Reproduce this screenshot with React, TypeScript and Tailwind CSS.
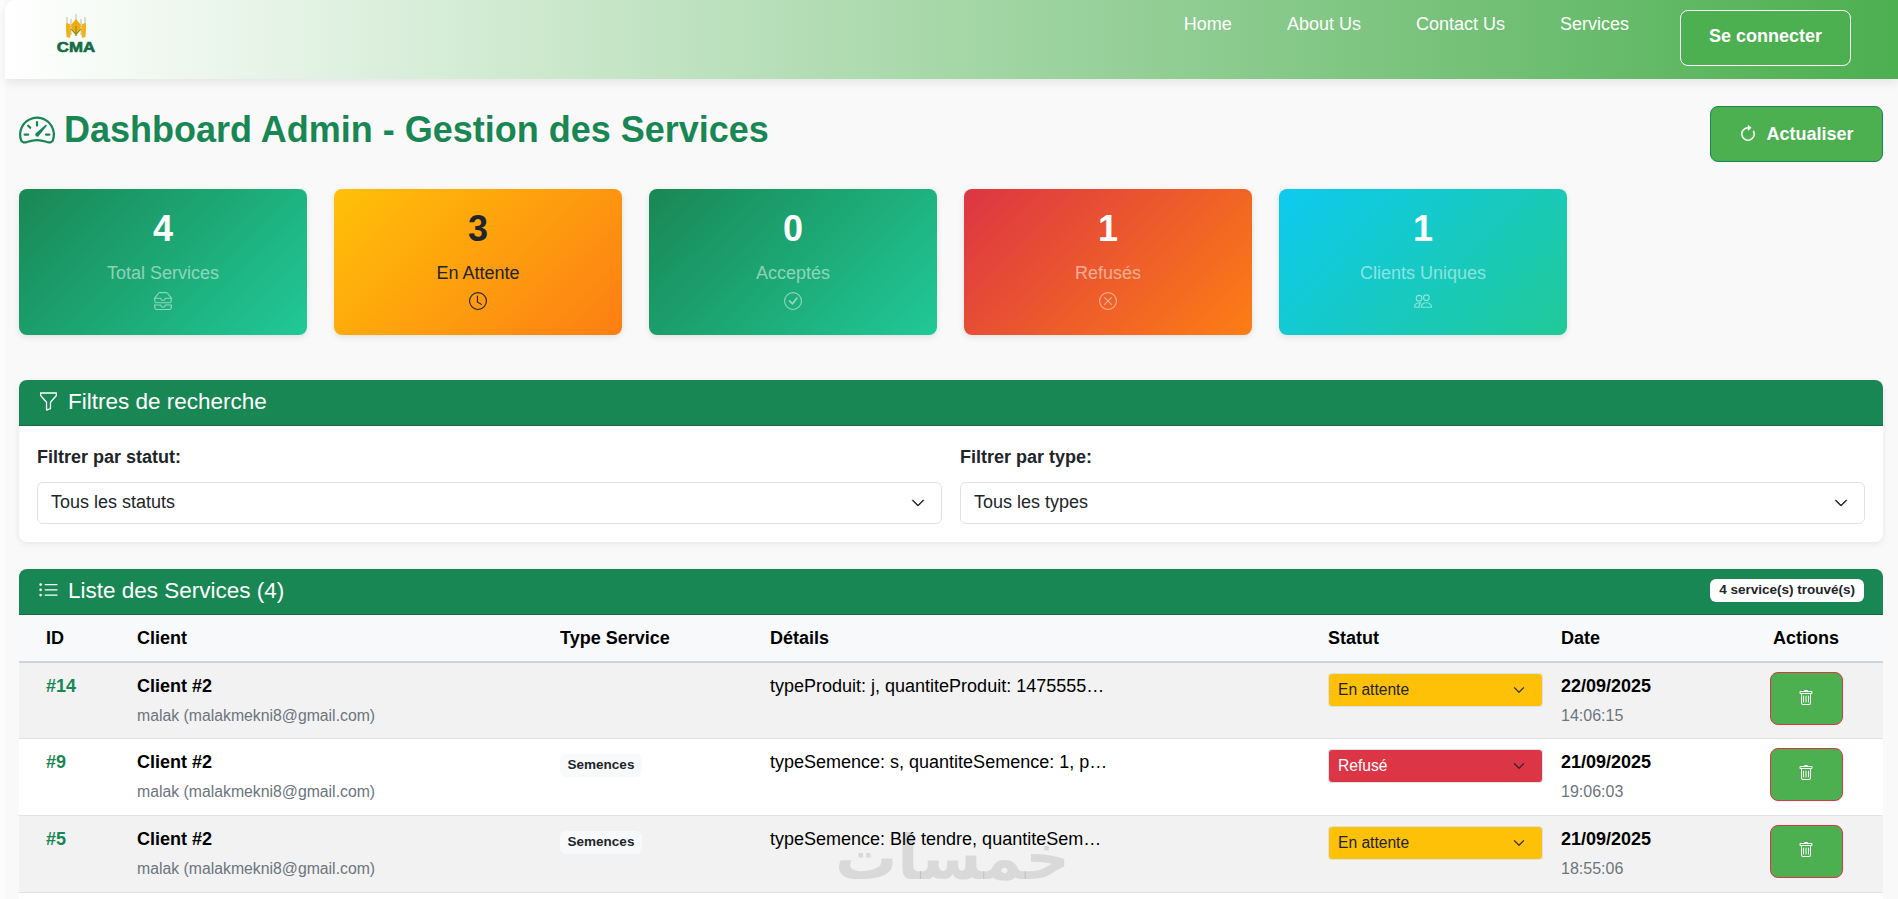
import { BsSpeedometer2, BsInboxes, BsClock, BsCheckCircle, BsXCircle, BsPeople, BsFunnel, BsListUl, BsTrash, BsArrowClockwise, BsChevronDown } from "react-icons/bs";

function Logo() {
  return (
    <div className="flex w-[60px] flex-col items-center">
      <svg width="24" height="26" viewBox="0 0 24 26">
        <path d="M3 3v20M7 5v16M12 0v22M17 5v16M21 3v20" stroke="#b9bfae" strokeWidth="1" fill="none" />
        <path d="M2 9l4 1 1 6-1 8-3-1-1-6z" fill="#f2b21a" />
        <path d="M22 9l-4 1-1 6 1 8 3-1 1-6z" fill="#f2b21a" />
        <path d="M12 5l5 6-1 6-4 5-4-5-1-6z" fill="#f5a90f" />
        <path d="M7 15l5 5 5-5M12 12v10" stroke="#5c9a3c" strokeWidth="1" fill="none" />
      </svg>
      <span className="mt-[1px] scale-x-[1.2] text-[14px] leading-[13px] font-bold text-[#146c43] [-webkit-text-stroke:0.6px_#146c43]">CMA</span>
    </div>
  );
}

const stats = [
  { n: "4", l: "Total Services", I: BsInboxes, g: "bg-[linear-gradient(135deg,#198754,#20c997)]", t: "text-white", s: "text-white/50" },
  { n: "3", l: "En Attente", I: BsClock, g: "bg-[linear-gradient(135deg,#ffc107,#fd7e14)]", t: "text-[#212529]", s: "text-[#212529]" },
  { n: "0", l: "Acceptés", I: BsCheckCircle, g: "bg-[linear-gradient(135deg,#198754,#20c997)]", t: "text-white", s: "text-white/50" },
  { n: "1", l: "Refusés", I: BsXCircle, g: "bg-[linear-gradient(135deg,#dc3545,#fd7e14)]", t: "text-white", s: "text-white/50" },
  { n: "1", l: "Clients Uniques", I: BsPeople, g: "bg-[linear-gradient(135deg,#0dcaf0,#20c997)]", t: "text-white", s: "text-white/50" },
];

const rows = [
  { id: "#14", type: "", d: "typeProduit: j, quantiteProduit: 1475555…", st: "En attente", date: "22/09/2025", time: "14:06:15", bg: "h-[76px] bg-[#f2f2f2]" },
  { id: "#9", type: "Semences", d: "typeSemence: s, quantiteSemence: 1, p…", st: "Refusé", date: "21/09/2025", time: "19:06:03", bg: "h-[77px] bg-white" },
  { id: "#5", type: "Semences", d: "typeSemence: Blé tendre, quantiteSem…", st: "En attente", date: "21/09/2025", time: "18:55:06", bg: "h-[77px] bg-[#f2f2f2]" },
];

function FilterSelect({ label, value }: { label: string; value: string }) {
  return (
    <div className="flex-1">
      <div className="mb-[11px] text-[18px] leading-[27px] font-bold text-[#212529]">{label}</div>
      <div className="flex h-[42px] items-center justify-between rounded-[6px] border border-[#dee2e6] bg-white pb-[1px] pl-[13px] pr-[16px] text-[18px] text-[#212529]">
        <span>{value}</span>
        <BsChevronDown className="text-[14px]" strokeWidth="0.8" />
      </div>
    </div>
  );
}

export default function App() {
  return (
    <div className="relative h-screen overflow-hidden bg-[#fcfcfc] pl-[5px] font-['Liberation_Sans',Arial,sans-serif]">
      <div className="h-full bg-[#f9f9f9]">
        <nav className="relative z-10 flex h-[79px] items-start justify-between rounded-tl-[10px] bg-[linear-gradient(90deg,#ffffff,#4caf50)] pl-[41px] pr-[47px] shadow-[0_4px_10px_rgba(0,0,0,0.08)]">
          <div className="pt-[14px]"><Logo /></div>
          <div className="flex items-start">
            <div className="mt-[13px] flex gap-[55px] text-[18px] leading-[22px] text-white">
              <span>Home</span>
              <span>About Us</span>
              <span>Contact Us</span>
              <span>Services</span>
            </div>
            <div className="mt-[10px] ml-[51px] flex h-[56px] w-[171px] items-center justify-center rounded-[8px] border border-white bg-[#4caf50] pb-[3px] text-[18px] font-bold text-white">Se connecter</div>
          </div>
        </nav>

        <div className="pl-[14px] pr-[15px]">
          <div className="flex items-start justify-between pt-[27px]">
            <h1 className="mt-[3px] flex items-center gap-[9px] text-[36px] leading-[42px] font-bold text-[#198754]">
              <BsSpeedometer2 className="h-[36px] w-[36px]" />
              Dashboard Admin - Gestion des Services
            </h1>
            <div className="flex h-[56px] w-[173px] items-center justify-center gap-[9px] rounded-[8px] border border-[#198754] bg-[#4caf50] text-[18px] font-bold text-white">
              <BsArrowClockwise className="text-[18px]" strokeWidth="0.4" />
              Actualiser
            </div>
          </div>

          <div className="mt-[27px] flex gap-[27px]">
            {stats.map((s) => (
              <div key={s.l} className={`flex h-[146px] w-[288px] flex-col items-center rounded-[8px] pt-[19px] shadow-[0_2px_6px_rgba(0,0,0,0.1)] ${s.g}`}>
                <div className={`text-[36px] leading-[42px] font-bold ${s.t}`}>{s.n}</div>
                <div className={`mt-[13px] text-[18px] leading-[21px] ${s.s}`}>{s.l}</div>
                <s.I className={`mt-[8px] h-[18px] w-[18px] ${s.s}`} />
              </div>
            ))}
          </div>

          <div className="mt-[45px] overflow-hidden rounded-[8px] bg-white shadow-[0_2px_6px_rgba(0,0,0,0.08)]">
            <div className="flex h-[46px] items-center gap-[9px] border-b border-[#146c43] bg-[#198754] pb-[2px] pl-[19px] text-[22.5px] text-white">
              <BsFunnel className="h-[21px] w-[21px]" />
              Filtres de recherche
            </div>
            <div className="flex gap-[18px] px-[18px] pt-[18px] pb-[18px]">
              <FilterSelect label="Filtrer par statut:" value="Tous les statuts" />
              <FilterSelect label="Filtrer par type:" value="Tous les types" />
            </div>
          </div>

          <div className="mt-[27px] overflow-hidden rounded-t-[8px] bg-white">
            <div className="flex h-[46px] items-center justify-between border-b border-[#146c43] bg-[#198754] pb-[2px] pl-[19px] pr-[19px] text-[22.5px] text-white">
              <div className="flex items-center gap-[9px]">
                <BsListUl className="h-[21px] w-[21px]" />
                Liste des Services (4)
              </div>
              <span className="flex h-[23px] items-center rounded-[6px] bg-white px-[9px] text-[13.5px] font-bold text-[#212529]">4 service(s) trouvé(s)</span>
            </div>
            <table className="w-full table-fixed border-collapse text-[18px]">
              <colgroup>
                <col className="w-[110px]" />
                <col className="w-[423px]" />
                <col className="w-[210px]" />
                <col className="w-[558px]" />
                <col className="w-[233px]" />
                <col className="w-[176px]" />
                <col />
              </colgroup>
              <thead>
                <tr className="h-[47px] border-b-2 border-[#ced4da] bg-[#f8f9fa] text-left font-bold text-black">
                  <th className="pl-[27px]">ID</th>
                  <th className="pl-[8px]">Client</th>
                  <th className="pl-[8px]">Type Service</th>
                  <th className="pl-[8px]">Détails</th>
                  <th className="pl-[8px]">Statut</th>
                  <th className="pl-[8px]">Date</th>
                  <th className="text-center">Actions</th>
                </tr>
              </thead>
              <tbody>
                {rows.map((r) => (
                  <tr key={r.id} className={`border-b border-[#dee2e6] align-top ${r.bg}`}>
                    <td className="pl-[27px] pt-[10px] leading-[27px] font-bold text-[#198754]">{r.id}</td>
                    <td className="pl-[8px] pt-[10px]">
                      <div className="leading-[27px] font-bold text-black">Client #2</div>
                      <div className="mt-[4px] text-[15.8px] leading-[24px] text-[#6c757d]">malak (malakmekni8@gmail.com)</div>
                    </td>
                    <td className="pl-[8px] pt-[15px]">
                      {r.type && <span className="flex h-[23px] w-[82px] items-center justify-center rounded-[6px] bg-[#f8f9fa] text-[13.5px] font-bold text-[#212529]">{r.type}</span>}
                    </td>
                    <td className="pl-[8px] pt-[10px] leading-[27px] whitespace-nowrap text-black">{r.d}</td>
                    <td className="pl-[8px] pt-[10px]">
                      <div className={`flex h-[34px] w-[215px] items-center justify-between rounded-[4px] border border-[#dee2e6] pl-[9px] pr-[17px] text-[15.6px] ${r.st === "Refusé" ? "bg-[#dc3545] text-white" : "bg-[#ffc107] text-[#212529]"}`}>
                        <span>{r.st}</span>
                        <BsChevronDown className="text-[12px] text-[#212529]" strokeWidth="0.8" />
                      </div>
                    </td>
                    <td className="pl-[8px] pt-[10px]">
                      <div className="leading-[27px] font-bold text-black">{r.date}</div>
                      <div className="mt-[4px] text-[16px] leading-[24px] text-[#6c757d]">{r.time}</div>
                    </td>
                    <td className="pt-[9px] text-center">
                      <div className="mx-auto flex h-[53px] w-[73px] items-center justify-center rounded-[8px] border border-[#dc3545] bg-[#4caf50] pb-[2px] text-white">
                        <BsTrash className="text-[16px]" />
                      </div>
                    </td>
                  </tr>
                ))}
                <tr className="h-[77px] bg-white"><td colSpan={7} /></tr>
              </tbody>
            </table>
          </div>
        </div>
      </div>
      <div dir="rtl" className="pointer-events-none absolute left-[835px] top-[818px] font-['DejaVu_Sans',sans-serif] text-[62px] leading-[80px] font-bold text-black/10">خمسات</div>
    </div>
  );
}
